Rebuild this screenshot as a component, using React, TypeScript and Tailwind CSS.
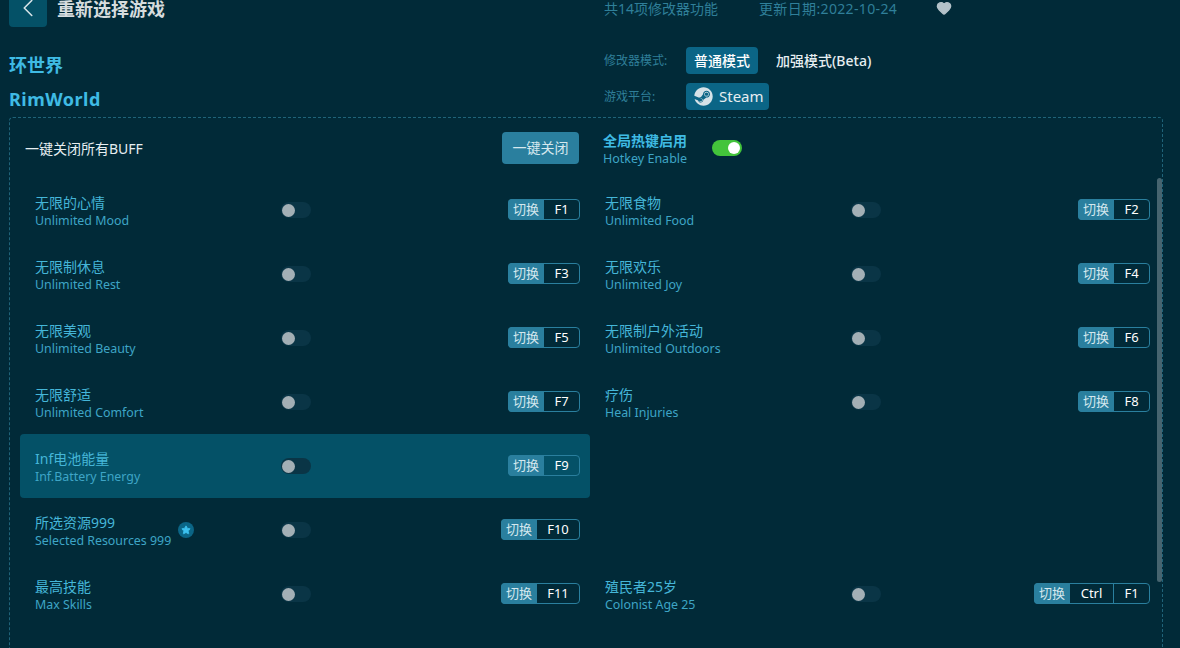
import { FaSteam } from 'react-icons/fa'
import { ChevronLeft, Heart, Star } from 'lucide-react'

type Cheat = {
  zh: string
  en: string
  keys: string[]
  star?: boolean
  active?: boolean
}

const rows: (Cheat | null)[] = [
  { zh: '无限的心情', en: 'Unlimited Mood', keys: ['F1'] },
  { zh: '无限食物', en: 'Unlimited Food', keys: ['F2'] },
  { zh: '无限制休息', en: 'Unlimited Rest', keys: ['F3'] },
  { zh: '无限欢乐', en: 'Unlimited Joy', keys: ['F4'] },
  { zh: '无限美观', en: 'Unlimited Beauty', keys: ['F5'] },
  { zh: '无限制户外活动', en: 'Unlimited Outdoors', keys: ['F6'] },
  { zh: '无限舒适', en: 'Unlimited Comfort', keys: ['F7'] },
  { zh: '疗伤', en: 'Heal Injuries', keys: ['F8'] },
  { zh: 'Inf电池能量', en: 'Inf.Battery Energy', keys: ['F9'], active: true },
  null,
  { zh: '所选资源999', en: 'Selected Resources 999', keys: ['F10'], star: true },
  null,
  { zh: '最高技能', en: 'Max Skills', keys: ['F11'] },
  { zh: '殖民者25岁', en: 'Colonist Age 25', keys: ['Ctrl', 'F1'] },
]

function KeyBind({ keys }: { keys: string[] }) {
  return (
    <div className="ml-auto -mt-px flex h-[21px] items-stretch rounded-[4px] border border-[#2a7f9e] text-[13px] leading-[19px]">
      <span className="-ml-px -my-px flex w-[36px] items-center justify-center rounded-l-[4px] bg-[#2a7f9e] text-[#d5e8ee]">切换</span>
      {keys.map((k, i) => (
        <span
          key={k}
          className={`flex items-center justify-center text-white ${i > 0 ? 'border-l border-[#2a7f9e]' : ''} ${k === 'Ctrl' ? 'w-[43px]' : k.length > 2 ? 'w-[42px]' : i > 0 ? 'w-[36px]' : 'w-[35px]'}`}
        >
          {k}
        </span>
      ))}
    </div>
  )
}

function Row({ cheat }: { cheat: Cheat | null }) {
  if (!cheat) return <div className="h-16" />
  return (
    <div className={`flex h-16 items-center pl-[15px] pr-[10px] ${cheat.active ? 'rounded-[4px] bg-[#045167]' : ''}`}>
      <div className="flex w-[246px] items-center">
        <div className="mt-[2px]">
          <div className="text-sm leading-[20px] text-[#45b6d8]">{cheat.zh}</div>
          <div className="text-[12.4px] leading-[16px] text-[#3ea5c6]">{cheat.en}</div>
        </div>
        {cheat.star && (
          <span className="ml-[7px] flex h-4 w-4 items-center justify-center rounded-full bg-[#0b6586]">
            <Star size={10} className="fill-[#3cc0ee] text-[#3cc0ee]" />
          </span>
        )}
      </div>
      <div className="flex h-4 w-[30px] items-center rounded-full bg-[#0a3546]">
        <span className="ml-px h-[13px] w-[13px] rounded-full bg-[#a3afb5]" />
      </div>
      <KeyBind keys={cheat.keys} />
    </div>
  )
}

export default function App() {
  return (
    <div className="h-[648px] w-[1180px] overflow-hidden bg-[#012a38] font-['Noto_Sans','Noto_Sans_CJK_SC',sans-serif]">
      <div className="flex h-[27px] items-start pl-[9px]">
        <button className="-mt-[11px] flex h-[38px] w-[38px] shrink-0 items-center justify-center rounded-[4px] bg-[#045167] text-[#d8e4e8]">
          <ChevronLeft size={30} strokeWidth={1.25} />
        </button>
        <h1 className="ml-[10px] text-lg font-bold leading-[18px] text-[#d6dcde]">重新选择游戏</h1>
        <span className="ml-[439px] text-sm leading-[17px] text-[#2f7f99]">共14项修改器功能</span>
        <span className="ml-[41px] text-sm leading-[17px] tracking-[0.35px] text-[#2f7f99]">更新日期:2022-10-24</span>
        <Heart size={16} className="ml-[39px] fill-[#b4c2c9] text-[#b4c2c9]" />
      </div>

      <div className="flex h-[90px] pl-[9px]">
        <div className="w-[595px] pt-[21px] text-lg font-bold leading-[34px] text-[#3fbbe4]">
          <div>环世界</div>
          <div className="tracking-[0.5px]">RimWorld</div>
        </div>
        <div className="pt-[20px] text-[12px] text-[#2f7f99]">
          <div className="flex h-[27px] items-center">
            <span className="w-[82px]">修改器模式:</span>
            <span className="flex h-[27px] w-[72px] items-center justify-center rounded-[4px] bg-[#0b6586] text-sm font-medium text-white">普通模式</span>
            <span className="ml-[18px] text-sm font-medium text-[#e6eef1]">加强模式(Beta)</span>
          </div>
          <div className="mt-[9px] flex h-[27px] items-center">
            <span className="w-[82px]">游戏平台:</span>
            <span className="flex h-[27px] w-[83px] items-center gap-[6px] rounded-[4px] bg-[#0b6586] pl-[8px] text-[15px] text-[#e6eef1]">
              <FaSteam size={19} className="text-[#d5e2e8]" />
              Steam
            </span>
          </div>
        </div>
      </div>

      <div className="relative ml-[9px] h-[560px] w-[1154px] rounded-[4px] border border-dashed border-[#1f6379]">
        <div className="flex h-[60px] items-center">
          <div className="flex w-[569px] items-center pl-[15px]">
            <span className="mt-[2px] text-sm text-[#e6eef1]">一键关闭所有BUFF</span>
            <button className="ml-auto h-8 w-[77px] rounded-[4px] bg-[#2a7f9e] text-sm text-[#d5e8ee]">一键关闭</button>
          </div>
          <div className="ml-[24px] mt-[2px] w-[109px]">
            <div className="text-sm font-bold leading-[18px] text-[#3fbbe4]">全局热键启用</div>
            <div className="text-[12.5px] leading-[17px] text-[#3ea5c6]">Hotkey Enable</div>
          </div>
          <div className="flex h-4 w-[30px] items-center justify-end rounded-full bg-[#43c43b] pr-[2px]">
            <span className="h-3 w-3 rounded-full bg-white" />
          </div>
        </div>
        <div className="ml-[10px] grid w-[1140px] grid-cols-2">
          {rows.map((r, i) => (
            <Row key={i} cheat={r} />
          ))}
        </div>
        <div className="absolute right-0 top-[60px] h-[404px] w-[5px] rounded-full bg-[#46646f]" />
      </div>
    </div>
  )
}
